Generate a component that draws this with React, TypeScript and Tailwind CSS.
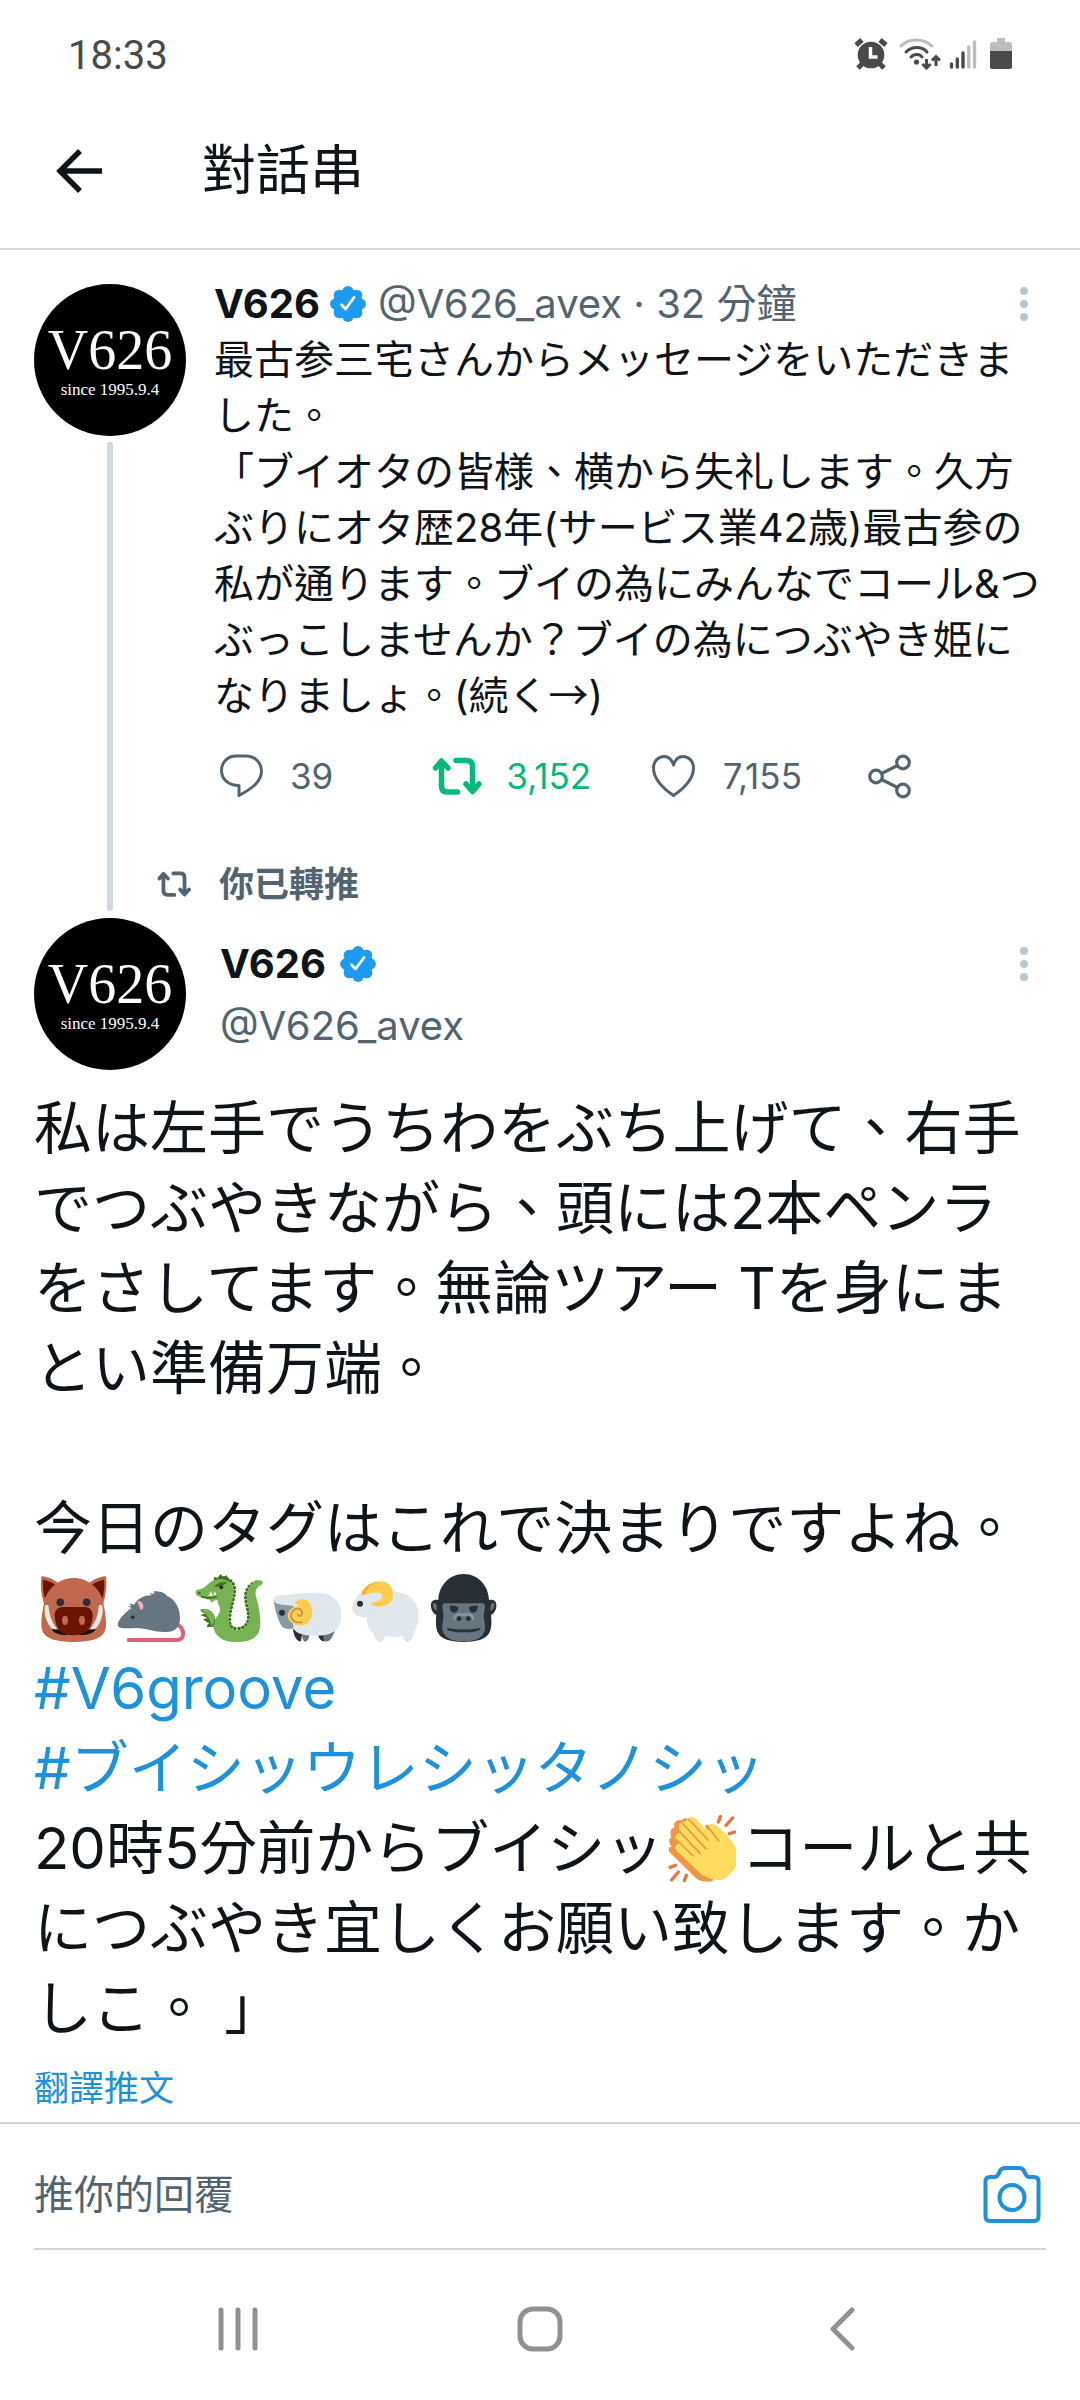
import type { ReactNode } from "react";

const HANDLE = "@V626_avex";

/* ---------- status bar icons ---------- */

function AlarmIcon() {
  return (
    <svg viewBox="0 0 34 32" className="h-8 w-[34px]" aria-hidden="true">
      <g stroke="#4a4a4a" strokeWidth="5" fill="none">
        <path d="M2 7 8 2M26 2l6 5" />
        <path d="M4 30l5-5M30 30l-5-5" />
      </g>
      <circle cx="17" cy="17" r="13.3" fill="#4a4a4a" />
      <path d="M16.500 9v10h7" fill="none" stroke="#fff" strokeWidth="3.500" />
    </svg>
  );
}

function WifiIcon() {
  return (
    <svg viewBox="0 0 42 32" className="h-8 w-[42px]" aria-hidden="true">
      <g fill="none" strokeWidth="3" strokeLinecap="round">
        <path d="M2 8c8-8 22-8 31 0" stroke="#bdbdbd" />
        <path d="M7 14c6-6 16-6 21 0" stroke="#4a4a4a" />
        <path d="M12 19c3-3.500 9-3.500 11 0" stroke="#4a4a4a" />
      </g>
      <circle cx="17.500" cy="24" r="2.600" fill="#4a4a4a" />
      <g fill="none" stroke="#4a4a4a" strokeWidth="3">
        <path d="M27.500 21v8M23.500 26l4 4 4-4" />
        <path d="M37 28v-8M33 22.500l4-4 4 4" />
      </g>
    </svg>
  );
}

function SignalIcon() {
  return (
    <svg viewBox="0 0 28 30" className="h-[30px] w-7" aria-hidden="true">
      <g strokeWidth="3.400" strokeLinecap="round">
        <path d="M2.500 25v3M8.300 20v8M14 14v14" stroke="#4a4a4a" />
        <path d="M19.800 8v20M25.500 3v25" stroke="#bdbdbd" />
      </g>
    </svg>
  );
}

function BatteryIcon() {
  return (
    <svg viewBox="0 0 22 32" className="h-8 w-[22px]" aria-hidden="true">
      <path d="M7 0h8v4h5a2 2 0 0 1 2 2v8H0V6a2 2 0 0 1 2-2h5z" fill="#bdbdbd" />
      <path d="M0 13h22v16a2 2 0 0 1-2 2H2a2 2 0 0 1-2-2z" fill="#4a4a4a" />
    </svg>
  );
}

/* ---------- tweet icons ---------- */

function BackArrow() {
  return (
    <svg viewBox="0 0 48 46" className="h-[46px] w-12" fill="none" stroke="#0f1419" strokeWidth="5.500" aria-hidden="true">
      <path d="M24 3 4 23l20 20M4 23h42" />
    </svg>
  );
}

function VerifiedBadge() {
  const lobes = [0, 45, 90, 135, 180, 225, 270, 315];
  return (
    <svg viewBox="0 0 36 36" className="size-9 shrink-0" role="img" aria-label="已認證">
      <g fill="#1d9bf0">
        <circle cx="18" cy="18" r="15" />
        {lobes.map((a) => (
          <circle key={a} cx="18" cy="5.800" r="5.700" transform={`rotate(${a} 18 18)`} />
        ))}
      </g>
      <path d="M11.500 18.800l4 4.200 8.500-11.500" fill="none" stroke="#fff" strokeWidth="2.800" strokeLinecap="round" strokeLinejoin="round" />
    </svg>
  );
}

function RetweetIcon({ className }: { className: string }) {
  return (
    <svg
      viewBox="0 0 50 38"
      className={className}
      fill="none"
      stroke="currentColor"
      strokeWidth="5.500"
      strokeLinecap="round"
      strokeLinejoin="round"
      aria-hidden="true"
    >
      <path d="M3.500 11l6-7 6.500 7M9.500 5v24q0 6 6 6h10" />
      <path d="M24 3.500h10.500q6 0 6 6V33M34 27l6.500 7.500L47 27" />
    </svg>
  );
}

function ReplyIcon() {
  return (
    <svg viewBox="0 0 44 46" className="h-[46px] w-11" fill="none" stroke="currentColor" strokeWidth="3" strokeLinejoin="round" aria-hidden="true">
      <path d="M17 3h10c9 0 15.500 7 15.500 15 0 10-8.500 17-22.500 24.500V32.500C9 32.500 2.500 26 2.500 17.500 2.500 9 9 3 17 3z" />
    </svg>
  );
}

function HeartIcon() {
  return (
    <svg viewBox="0 0 45 44" className="h-11 w-[45px]" fill="none" stroke="currentColor" strokeWidth="3" strokeLinejoin="round" aria-hidden="true">
      <path d="M22.500 41.500C10 33 2.500 23 2.500 14c0-7 5-11.500 10.500-11.500 4.500 0 8 3.500 9.500 8.500 1.500-5 5-8.500 9.500-8.500 5.500 0 10.500 4.500 10.500 11.500 0 9-7.500 19-20 27.500z" />
    </svg>
  );
}

function ShareIcon() {
  return (
    <svg viewBox="0 0 45 45" className="size-[45px]" fill="none" stroke="currentColor" strokeWidth="3.200" aria-hidden="true">
      <circle cx="9" cy="22.500" r="6.300" />
      <circle cx="36" cy="8.500" r="6.300" />
      <circle cx="36" cy="36.500" r="6.300" />
      <path d="M14.500 19.500 30.500 11.500M14.500 25.500l16 8" />
    </svg>
  );
}

function MoreIcon() {
  return (
    <svg viewBox="0 0 8 34" className="h-[34px] w-2" fill="#b9c8cf" aria-hidden="true">
      <circle cx="4" cy="4" r="4" />
      <circle cx="4" cy="17" r="4" />
      <circle cx="4" cy="30" r="4" />
    </svg>
  );
}

function CameraIcon() {
  return (
    <svg viewBox="0 0 60 60" className="size-[60px]" fill="none" stroke="#1d91d9" strokeWidth="4" strokeLinejoin="round" aria-hidden="true">
      <path d="M8 13h4.500c2 0 3-1 4-3l1.500-3c1-2 2.500-3 5-3h14c2.500 0 4 1 5 3l1.500 3c1 2 2 3 4 3H52c3 0 4.500 1.500 4.500 4.500v35c0 3-1.500 4.500-4.500 4.500H8c-3 0-4.500-1.500-4.500-4.500v-35C3.500 14.500 5 13 8 13z" />
      <circle cx="30" cy="33.500" r="12.500" />
    </svg>
  );
}

/* ---------- emoji ---------- */

function Emoji({ label, children }: { label: string; children: ReactNode }) {
  return (
    <svg viewBox="0 0 204 204" role="img" aria-label={label} className="mx-[5px] inline-block size-[68px] align-[-13px]">
      {children}
    </svg>
  );
}

function Boar() {
  return (
    <Emoji label="🐗">
      <path d="M7 10Q7 5 14 7C34 12 52 20 62 32L16 92C6 60 4 30 7 10zM201 10Q201 5 194 7C174 12 156 20 146 32l46 60c10-32 12-62 9-82z" fill="#c1694f" />
      <path d="M13 17c12 2 26 8 36 15L17 72C12 52 11 34 13 17zM195 17c-12 2-26 8-36 15l32 40c5-20 6-38 4-55z" fill="#6a1402" />
      <path d="M104 12C62 12 24 42 16 84c-6 24-9 44-9 70 0 42 47 50 97 50s97-8 97-50c0-26-3-46-9-70-8-42-46-72-88-72z" fill="#c1694f" />
      <path d="M38 165c20 2 34 2 50 12l-4 6c-24 0-40-6-46-18zM170 165c-20 2-34 2-50 12l4 6c24 0 40-6 46-18z" fill="#141414" />
      <path d="M74 99h60c22 0 30 14 26 36-4 34-22 49-56 49s-52-15-56-49c-4-22 4-36 26-36z" fill="#6a1402" />
      <path d="M18 95c5-5 11-3 11 3 2 28 10 46 25 66-8 4-16 1-20-5-14-20-20-42-16-64zM190 95c-5-5-11-3-11 3-2 28-10 46-25 66 8 4 16 1 20-5 14-20 20-42 16-64z" fill="#e6e7e8" />
      <circle cx="64" cy="85" r="11.500" fill="#292f33" />
      <circle cx="143" cy="85" r="11.500" fill="#292f33" />
      <ellipse cx="78" cy="139" rx="9" ry="14" fill="#c1694f" />
      <ellipse cx="129" cy="139" rx="9" ry="14" fill="#c1694f" />
    </Emoji>
  );
}

function Rat() {
  return (
    <Emoji label="🐀">
      <path d="M35 198h145c24 0 24-32 2-46" fill="none" stroke="#e0607a" strokeWidth="12" strokeLinecap="round" />
      <path
        d="M2 152c2-14 18-34 42-50l-11-5 11-1-8-8 16 4c8-18 30-28 52-28l-6-7 14 3-2-8c20 0 34 4 40 14 22 8 38 34 39 62 1 30-12 46-42 46-34 1-60-12-88-12-26 1-57 4-57-10z"
        fill="#66757f"
      />
      <path d="M60 83c8-6 20 4 19 15 0 6-4 10-9 9-2-8-6-16-10-24z" fill="#f4abba" />
      <circle cx="47" cy="130" r="5.500" fill="#292f33" />
    </Emoji>
  );
}

function Dragon() {
  return (
    <Emoji label="🐉">
      {/* body with the spines as a dotted edge along the neck and tail */}
      <path
        d="M84 12C112 14 122 36 118 58c-4 28-16 56-14 88 2 14 10 18 21 18 18 0 32-8 35-28 3-24-8-44-8-68 0-22 14-40 32-44"
        fill="none"
        stroke="#3e721d"
        strokeWidth="10"
        strokeLinecap="round"
        strokeDasharray="1 11"
      />
      <path d="M56 20l2-12 10 4 8-12 8 8 12-4 2 12 8 6-30 6z" fill="#3e721d" />
      <path
        d="M8 47c20-2 26-14 40-24 20-14 58-10 66 16 8 30-14 60-13 94 1 26 8 36 24 36 22 0 36-14 38-38 2-24-8-42-8-64 0-26 18-48 38-48 12 0 13 10 6 14-16 6-21 20-15 38 8 26 12 48 12 76 0 40-22 57-74 57-38 0-66-16-68-54-1-14 20-24 21-42 1-12-9-18-7-29-8-2-14 1-18 8l-5-10-15-2 9-7c-14 2-30 2-35-6-4-8-2-15 4-15z"
        fill="#77b255"
      />
      <path d="M18 68c18 5 36 5 48-1" fill="none" stroke="#3e721d" strokeWidth="5" />
      <path d="M40 66l8-14 6 13zM55 64l5-12 5 12z" fill="#fff" />
      <path d="M58 39c4-12 22-16 38-14-5 8-20 14-38 14z" fill="#3e721d" />
      <circle cx="79" cy="40" r="6" fill="#292f33" />
      <circle cx="13" cy="57" r="4" fill="#3e721d" />
      <path d="M64 160c-10-2-22-2-28 0 0-8 2-10 7-13-8-2-14-6-18-12 6-2 10-3 15-1-8-4-14-8-24-10 6-4 12-5 18-3-10-4-14-9-19-14 24-5 40 4 44 22 2 10 0 20-5 31z" fill="#3e721d" />
      <path d="M20 108c18-3 34 4 38 20 2 10-3 22-8 28-4-12-8-30-30-48z" fill="#77b255" />
    </Emoji>
  );
}

function Ram() {
  return (
    <Emoji label="🐏">
      <path d="M60 164c2 20 10 38 24 38l4-26zM134 180c4 14 10 22 20 22l4-22z" fill="#292f33" />
      <path d="M86 174c2 18 4 28 10 29 8 0 12-10 14-22zM150 180c0 12 2 22 10 23 12 0 20-16 26-34z" fill="#66757f" />
      <path d="M3 78c26 2 58 4 72 24 12 22 2 48-12 60-12 4-28 4-34-3-8-6-26-52-26-81z" fill="#8899a6" />
      <path d="M3 76c0-10 12-13 26-13 24 0 38-5 70-6 24-1 46-2 64 4 28 10 42 34 42 62 0 42-24 60-68 62-38 2-66-4-76-22V96C36 92 4 96 3 76z" fill="#e1e8ed" />
      <path d="M65 86c10-12 24-14 32-8 14 2 20 22 20 38 0 26-18 42-42 38-16-1-30-14-31-28 0-16 16-30 34-30-4-5-8-8-13-10z" fill="#ffcc4d" />
      <path d="M88 144c-22 6-34-8-34-18 0-12 10-22 20-22 12 0 16 10 12 18-4 6-12 4-12-2" fill="none" stroke="#c3914f" strokeWidth="5" />
      <circle cx="27" cy="116" r="9" fill="#292f33" />
    </Emoji>
  );
}

function Goat() {
  return (
    <Emoji label="🐑">
      <path
        d="M3 100c4-18 14-34 30-46 18-14 52-14 68 2 30-4 60-2 80 16 30 26 26 74 8 104-4 16-12 28-20 28-8-1-12-10-14-18-16 4-34 4-52 0-4 12-8 18-16 18-12-1-16-12-19-24-12-12-23-28-21-50-18 2-44-4-44-30z"
        fill="#e1e8ed"
      />
      <path d="M33 54c14-20 34-32 56-32 30 0 42 30 36 52-6 20-40 30-60 20-6-3-5-8 0-9 18-2 30-10 28-20-2-18-36-6-56-2-6 1-8-4-4-9z" fill="#ffcc4d" />
      <path d="M33 54c10-18 26-28 44-32-20 12-30 20-34 38-6 4-14 1-10-6z" fill="#ffac33" />
      <circle cx="27" cy="89" r="9" fill="#292f33" />
    </Emoji>
  );
}

function Gorilla() {
  return (
    <Emoji label="🦍">
      <path
        d="M104 0C58 0 29 38 28 78c-14-4-24 4-22 20 2 14 10 22 16 24-4 40 0 66 34 76 28 8 68 8 96 0 34-10 38-36 34-76 6-2 14-10 16-24 2-16-8-24-22-20C179 38 150 0 104 0z"
        fill="#292f33"
      />
      <path d="M12 88c8-2 12 0 12 22-9-2-13-12-12-22zM196 88c-8-2-12 0-12 22 9-2 13-12 12-22z" fill="#66757f" />
      <path d="M50 88h108c10 0 12 8 8 22-2 10-2 22 1 36 8 38-18 56-63 56s-71-18-63-56c3-14 3-26 1-36-4-14-2-22 8-22z" fill="#66757f" />
      <path d="M62 96c10-2 22 0 26 4 0 10-6 16-13 16s-13-6-13-20zM146 96c-10-2-22 0-26 4 0 10 6 16 13 16s13-6 13-20z" fill="#292f33" />
      <path d="M76 134c0-12 16-16 28-11 12-5 28-1 28 11" fill="none" stroke="#8899a6" strokeWidth="7" strokeLinecap="round" />
      <circle cx="90" cy="134" r="7" fill="#292f33" />
      <circle cx="118" cy="134" r="7" fill="#292f33" />
      <path d="M54 161c20 7 80 7 100 0 2 10-22 14-50 14s-52-4-50-14z" fill="#292f33" />
    </Emoji>
  );
}

function Clap() {
  return (
    <Emoji label="👏">
      <path
        d="M42 18c10-10 20-4 26 4l88 90-22 90c-20 4-36-2-48-8L8 118c-10-10-6-20 4-20-12-10-10-24-2-28-6-12-2-28 10-30-6-12 4-24 22-22z"
        fill="#ef9645"
      />
      <path d="M110 36c10-6 16 0 22 4l50 52-20 30z" fill="#ef9645" />
      <path
        d="M60 14c8-8 18-6 24 0l36 40 2-12c-2-12 12-16 20-9 22 14 46 40 58 62 6 14 6 32 3 45l4 12c-10 18-24 36-46 46-20 2-44-6-62-18L26 110c-8-10-2-20 8-22l-8-8c-8-12-2-22 10-24l-2-10c-4-14 4-22 14-20 2-4 6-8 12-12z"
        fill="#ffdc5d"
      />
      <path d="M44 29l70 76M31 49l66 70M26 78l48 46M62 16l58 62M116 34l36 46" fill="none" stroke="#ef9645" strokeWidth="5" strokeLinecap="round" />
      <g stroke="#e8743f" strokeWidth="10" strokeLinecap="round">
        <path d="M157 8l-6 16M194 12l-20 22M200 54l-16 5M6 160l16-6M11 198l20-24M49 200l6-16" />
      </g>
    </Emoji>
  );
}

/* ---------- page parts ---------- */

function Avatar() {
  return (
    <div className="flex size-[152px] shrink-0 flex-col items-center rounded-full bg-black pt-9 font-['Liberation_Serif',serif] text-white">
      <span className="text-[56px] leading-[60px]">V626</span>
      <span className="text-[17px] leading-5">since 1995.9.4</span>
    </div>
  );
}

function MoreButton() {
  return (
    <button type="button" aria-label="更多" className="mr-[18px] ml-auto shrink-0">
      <MoreIcon />
    </button>
  );
}

function Action({ label, count, className, children }: { label: string; count?: string; className?: string; children: ReactNode }) {
  return (
    <button type="button" aria-label={label} className={`flex items-center gap-[22px] text-[35px] leading-[46px] ${className ?? ""}`}>
      <span className="flex w-[54px] justify-center">{children}</span>
      {count}
    </button>
  );
}

function StatusBar() {
  return (
    <div className="flex h-28 items-center pr-[68px] pl-[68px]">
      <span className="font-[Roboto,sans-serif] text-[40px] leading-none text-[#4a4a4a]">18:33</span>
      <div className="ml-auto flex items-center pb-1">
        <AlarmIcon />
        <span className="ml-[11px]">
          <WifiIcon />
        </span>
        <span className="ml-2">
          <SignalIcon />
        </span>
        <span className="ml-[13px]">
          <BatteryIcon />
        </span>
      </div>
    </div>
  );
}

function ParentTweet() {
  return (
    <article className="flex gap-7 px-[34px] pt-[26px]">
      <div className="flex flex-col items-center pt-2">
        <Avatar />
        <div className="mt-1.5 w-1.5 flex-1 rounded-t-full bg-[#cfd9de]" />
      </div>
      <div className="min-w-0 flex-1 pb-[52px]">
        <div className="flex h-14 items-center whitespace-nowrap">
          <span className="font-bold">V626</span>
          <span className="ml-2.5">
            <VerifiedBadge />
          </span>
          <span className="ml-3 text-[#536471]">{HANDLE} · 32 分鐘</span>
          <MoreButton />
        </div>
        <p className="leading-14 whitespace-pre-line">
          {"最古参三宅さんからメッセージをいただきました。\n「ブイオタの皆様、横から失礼します。久方ぶりにオタ歴28年(サービス業42歳)最古参の私が通ります。ブイの為にみんなでコール&つぶっこしませんか？ブイの為につぶやき姫になりましょ。(続く"}
          <span className="font-['Noto_Sans_CJK_TC',sans-serif] leading-none">→</span>)
        </p>
        <div className="mt-[29px] grid grid-cols-[26%_26%_26%_auto] text-[#536471]">
          <Action label="回覆" count="39">
            <ReplyIcon />
          </Action>
          <Action label="轉推" count="3,152" className="text-[#00ba7c]">
            <RetweetIcon className="h-[38px] w-[50px]" />
          </Action>
          <Action label="喜歡" count="7,155">
            <HeartIcon />
          </Action>
          <Action label="分享">
            <ShareIcon />
          </Action>
        </div>
      </div>
    </article>
  );
}

function MainTweet() {
  return (
    <article className="px-[34px]">
      <div className="flex h-[67px] text-[#536471]">
        <div className="mb-[7px] ml-[73px] w-1.5 rounded-b-full bg-[#cfd9de]" />
        <div className="ml-11 flex h-[66px] items-center gap-7">
          <RetweetIcon className="h-[26px] w-[34px]" />
          <span className="text-[35px] leading-none font-bold">你已轉推</span>
        </div>
      </div>
      <div className="flex gap-[34px]">
        <Avatar />
        <div className="flex-1 pt-[18px]">
          <div className="flex h-14 items-center">
            <span className="font-bold">V626</span>
            <span className="ml-3.5">
              <VerifiedBadge />
            </span>
            <MoreButton />
          </div>
          <div className="mt-1.5 leading-14 text-[#536471]">{HANDLE}</div>
        </div>
      </div>
      <p className="mt-[18px] text-[58px] leading-20 whitespace-pre-line">
        {"私は左手でうちわをぶち上げて、右手でつぶやきながら、頭には2本ペンラをさしてます。無論ツアー Tを身にまとい準備万端。\n\n今日のタグはこれで決まりですよね。\n"}
        <Boar />
        <Rat />
        <Dragon />
        <Ram />
        <Goat />
        <Gorilla />
        {"\n"}
        <a href="#V6groove" className="text-[#1d91d9]">
          #V6groove
        </a>
        {"\n"}
        <a href="#vtag" className="text-[#1d91d9]">
          #ブイシッウレシッタノシッ
        </a>
        {"\n20時5分前からブイシッ"}
        <Clap />
        {"コールと共につぶやき宜しくお願い致します。かしこ。 」"}
      </p>
      <button type="button" className="mt-4 mb-2.5 block text-[35px] leading-12 text-[#1d91d9]">
        翻譯推文
      </button>
    </article>
  );
}

function ReplyBar() {
  return (
    <form className="border-t-2 border-[#cfd6d9] px-[34px]" onSubmit={(e) => e.preventDefault()}>
      <div className="flex h-[126px] items-center border-b-2 border-[#cfd6d9] pt-4">
        <input
          type="text"
          aria-label="推你的回覆"
          placeholder="推你的回覆"
          className="h-16 min-w-0 flex-1 outline-none placeholder:text-[#536471]"
        />
        <button type="button" aria-label="相機" className="mr-1">
          <CameraIcon />
        </button>
      </div>
    </form>
  );
}

function NavBar() {
  return (
    <nav className="grid h-[150px] grid-cols-[28%_28%_28%] content-center justify-center justify-items-center pt-2">
      <button type="button" aria-label="最近使用">
        <svg viewBox="0 0 40 44" className="h-11 w-10" stroke="#919191" strokeWidth="5" strokeLinecap="round" aria-hidden="true">
          <path d="M3 3v38M20 3v38M37 3v38" />
        </svg>
      </button>
      <button type="button" aria-label="主畫面">
        <svg viewBox="0 0 46 46" className="size-[46px]" fill="none" stroke="#919191" strokeWidth="5" aria-hidden="true">
          <rect x="3" y="3" width="40" height="40" rx="13" />
        </svg>
      </button>
      <button type="button" aria-label="返回">
        <svg viewBox="0 0 26 44" className="h-11 w-[26px]" fill="none" stroke="#919191" strokeWidth="5" strokeLinecap="round" strokeLinejoin="round" aria-hidden="true">
          <path d="M23 3 4 22l19 19" />
        </svg>
      </button>
    </nav>
  );
}

export default function App() {
  return (
    <div lang="zh-Hant" className="min-h-screen bg-white font-[Inter,'Noto_Sans_CJK_TC',sans-serif] text-[40px] text-[#0f1419]">
      <StatusBar />
      <header className="flex h-[138px] items-center border-b-2 border-[#d5dbde] pb-[18px] pl-14">
        <button type="button" aria-label="返回">
          <BackArrow />
        </button>
        <h1 className="ml-[98px] text-[54px] leading-none">對話串</h1>
      </header>
      <main>
        <ParentTweet />
        <MainTweet />
      </main>
      <ReplyBar />
      <NavBar />
    </div>
  );
}
